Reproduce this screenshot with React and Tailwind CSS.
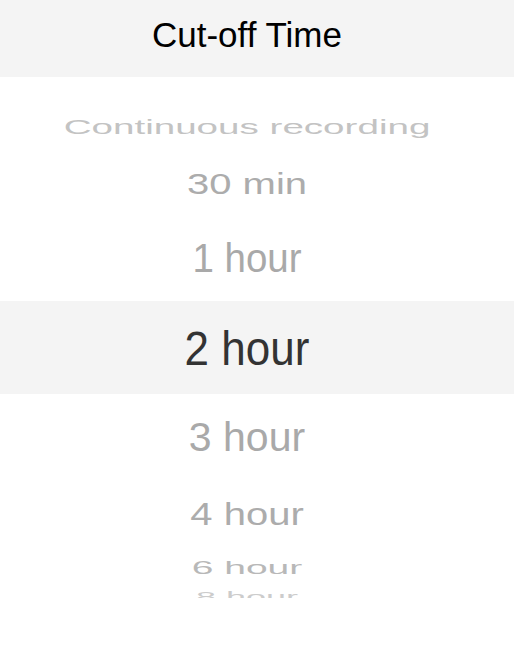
const rows = [
  { label: "Continuous recording", h: "h-[55px]", size: "text-[38.6px]", scale: "scale-y-[0.54]", color: "text-[#c3c3c3]" },
  { label: "30 min", h: "h-[56px]", size: "text-[40px]", scale: "scale-y-[0.76]", color: "text-[#acacac]" },
  { label: "1 hour", h: "h-[90px] pt-[4px]", size: "text-[38.5px]", scale: "scale-y-[1.05]", color: "text-[#a9a9a9]" },
];

const rowsBelow = [
  { label: "3 hour", h: "h-[87px]", size: "text-[41px]", scale: "scale-y-[0.99]", color: "text-[#a9a9a9]" },
  { label: "4 hour", h: "h-[65px]", size: "text-[40px]", scale: "scale-y-[0.8]", color: "text-[#acacac]" },
  { label: "6 hour", h: "h-[42px]", size: "text-[39px]", scale: "scale-y-[0.47]", color: "text-[#b8b8b8]" },
];

function Row({ item }) {
  return (
    <div className={`flex items-center justify-center ${item.h}`}>
      <span className={`leading-none ${item.size} ${item.scale} ${item.color}`}>{item.label}</span>
    </div>
  );
}

export default function App() {
  return (
    <div className="w-[514px] h-[648px] bg-white overflow-hidden" style={{ fontFamily: '"Liberation Sans", Arial, sans-serif' }}>
      {/* header */}
      <div className="h-[77px] bg-[#f4f4f4] flex items-center justify-center pr-[20px] pb-[8px]">
        <span className="text-[35px] leading-none text-black">Cut-off Time</span>
      </div>

      {/* picker wheel */}
      <div className="pt-[23px]">
        <div className="pr-[20px]">
          {rows.map((r) => (
            <Row key={r.label} item={r} />
          ))}
        </div>
        <div className="h-[93px] bg-[#f4f4f4] flex items-center justify-center pr-[20px]">
          <span className="text-[44px] leading-none text-[#333333] scale-y-[1.11]">2 hour</span>
        </div>
        <div className="pr-[20px]">
          {rowsBelow.map((r) => (
            <Row key={r.label} item={r} />
          ))}
          <div className="h-[10px] overflow-hidden flex items-center justify-center">
            <span className="text-[36px] leading-none text-[#cccccc] scale-y-[0.4] translate-y-[4px]">8 hour</span>
          </div>
        </div>
      </div>
    </div>
  );
}
